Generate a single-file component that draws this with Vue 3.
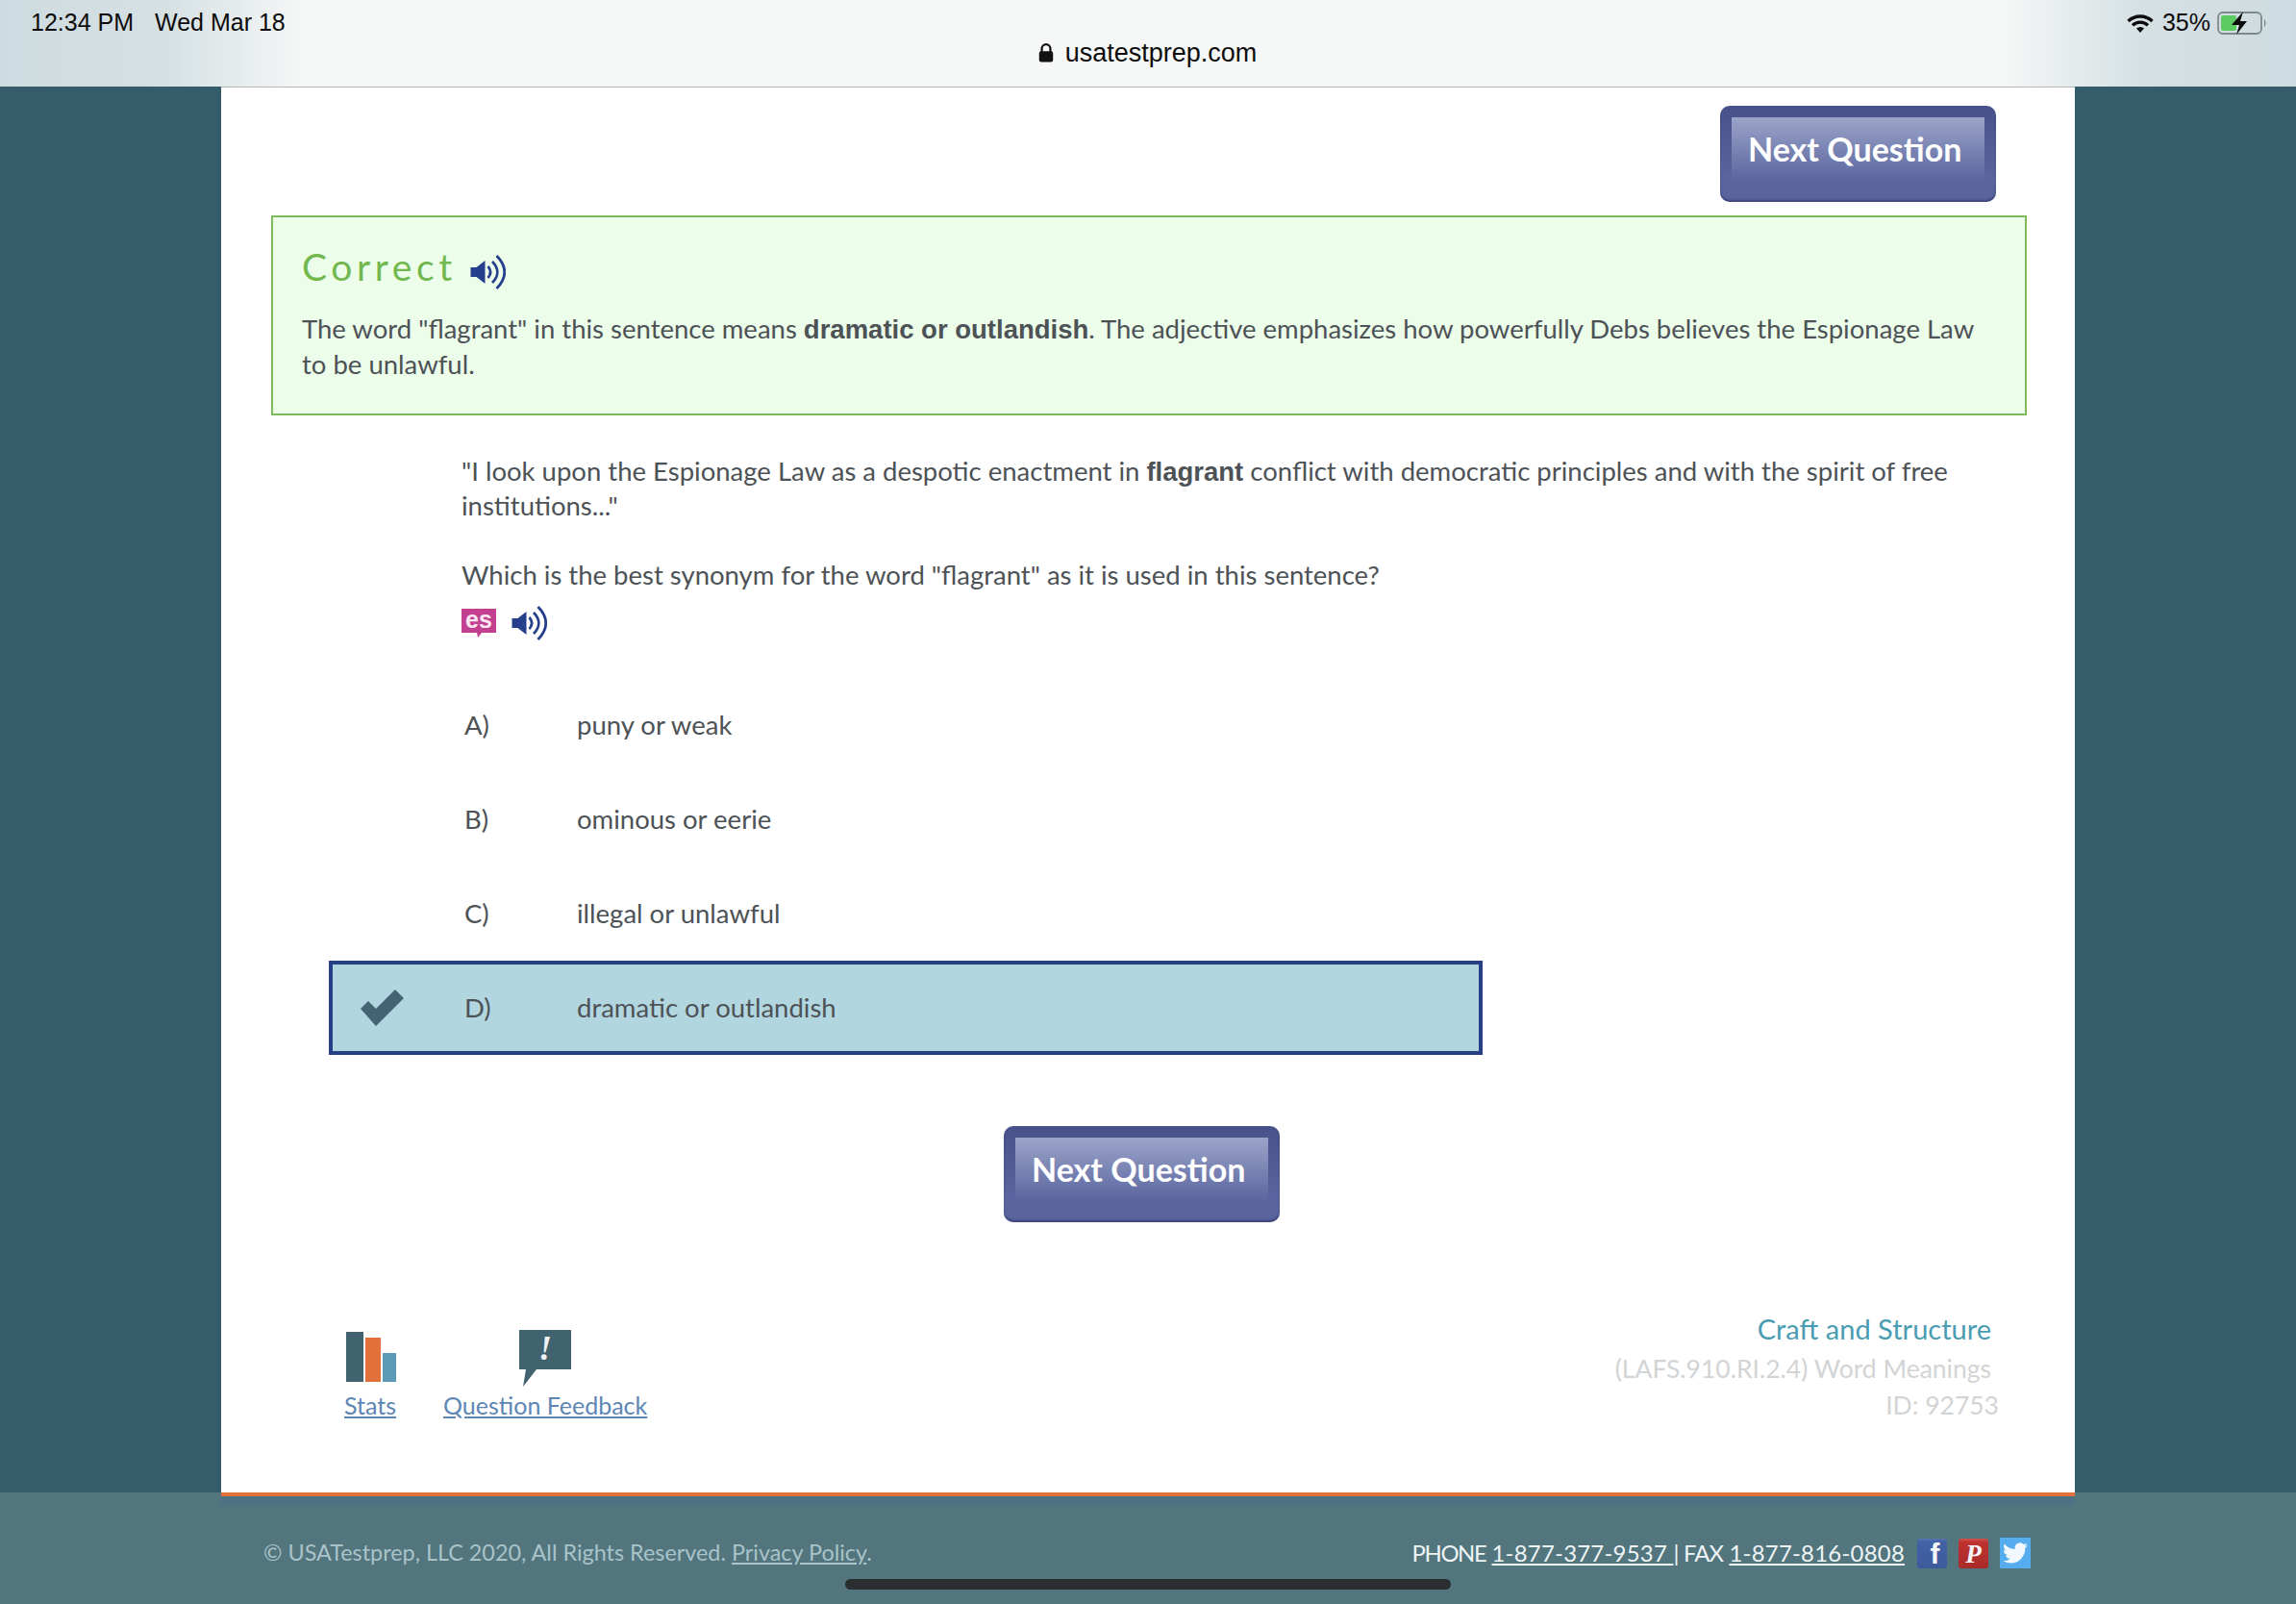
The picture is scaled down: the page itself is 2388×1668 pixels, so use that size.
<script setup>
const options = [
  { letter: 'A)', text: 'puny or weak' },
  { letter: 'B)', text: 'ominous or eerie' },
  { letter: 'C)', text: 'illegal or unlawful' },
  { letter: 'D)', text: 'dramatic or outlandish', selected: true }
]
</script>

<template>
  <div class="page">
    <header class="topbar">
      <div class="status-left"><span>12:34 PM</span><span>Wed Mar 18</span></div>
      <div class="url">
        <svg class="lock" viewBox="0 0 14 18"><path d="M3 8V5a4 4 0 0 1 8 0v3" fill="none" stroke="#111" stroke-width="2"/><rect x="0.5" y="7.5" width="13" height="10" rx="2" fill="#111"/></svg>
        <span>usatestprep.com</span>
      </div>
      <div class="status-right">
        <svg class="wifi" viewBox="0 0 28 20"><path d="M1.5 8a18 18 0 0 1 25 0M6 12.4a11.5 11.5 0 0 1 16 0" fill="none" stroke="#0c0c0c" stroke-width="3.4"/><path d="M10 15.5a6 6 0 0 1 8 0l-4 4.5z" fill="#0c0c0c"/></svg>
        <span>35%</span>
        <svg class="battery" viewBox="0 0 52 24"><rect x="1" y="1" width="45" height="22" rx="5" fill="none" stroke="#7d8a8c" stroke-width="1.8"/><rect x="4" y="4" width="16" height="16" rx="2" fill="#5ccb62"/><path d="M27 0 15 14h8l-3 10 11-14h-7z" fill="#0c0c0c"/><path d="M49 8c2 1 2 7 0 8z" fill="#7d8a8c"/></svg>
      </div>
    </header>

    <main class="panel">
      <div class="top-action">
        <a class="next-btn"><span class="next-inner">Next Question</span></a>
      </div>

      <section class="feedback">
        <h2 class="feedback-title">
          <span>Correct</span>
          <svg class="speaker" viewBox="0 0 36 36"><path d="M0 13h6l9-7v24l-9-7H0z" fill="#263f8c"/><path d="M18 12c3.5 4 3.5 8 0 12M22.5 7c7 7 7 15 0 22M27 1c11 11 11 23 0 34" fill="none" stroke="#263f8c" stroke-width="2.8"/></svg>
        </h2>
        <p class="feedback-body">The word "flagrant" in this sentence means <b>dramatic or outlandish</b>. The adjective emphasizes how powerfully Debs believes the Espionage Law to be unlawful.</p>
      </section>

      <section class="question">
        <p class="quote">"I look upon the Espionage Law as a despotic enactment in <b>flagrant</b> conflict with democratic principles and with the spirit of free institutions..."</p>
        <p class="prompt">Which is the best synonym for the word "flagrant" as it is used in this sentence?</p>
        <div class="tools">
          <svg class="es" viewBox="0 0 36 30"><path d="M0 0h36v25H21l-4 5-1-5H0z" fill="#c2408f"/><text x="18" y="19.5" text-anchor="middle" class="es-text">es</text></svg>
          <svg class="speaker" viewBox="0 0 36 36"><path d="M0 13h6l9-7v24l-9-7H0z" fill="#263f8c"/><path d="M18 12c3.5 4 3.5 8 0 12M22.5 7c7 7 7 15 0 22M27 1c11 11 11 23 0 34" fill="none" stroke="#263f8c" stroke-width="2.8"/></svg>
        </div>
      </section>

      <section class="options">
        <div v-for="o in options" :key="o.letter" class="option" :class="{ selected: o.selected }">
          <span class="check-cell">
            <svg v-if="o.selected" class="check" viewBox="0 0 45 38"><path d="M0 20 8 12l8 8L36 0l9 9-29 29z" fill="#456374"/></svg>
          </span>
          <span class="letter">{{ o.letter }}</span>
          <span class="answer">{{ o.text }}</span>
        </div>
      </section>

      <div class="bottom-action">
        <a class="next-btn"><span class="next-inner">Next Question</span></a>
      </div>

      <section class="meta">
        <div class="meta-links">
          <a class="meta-link stats">
            <span class="bars"><i class="bar b1"></i><i class="bar b2"></i><i class="bar b3"></i></span>
            <span class="meta-label">Stats</span>
          </a>
          <a class="meta-link fb-link">
            <svg class="bubble" viewBox="0 0 54 59"><path d="M0 0h54v41H18L4 59l3-18H0z" fill="#41636f"/><text x="27" y="31" text-anchor="middle" class="bang">!</text></svg>
            <span class="meta-label">Question Feedback</span>
          </a>
        </div>
        <div class="meta-info">
          <div class="standard">Craft and Structure</div>
          <div class="code">(LAFS.910.RI.2.4) Word Meanings</div>
          <div class="qid">ID: 92753</div>
        </div>
      </section>
    </main>

    <footer class="footer">
      <div class="accent"></div>
      <div class="band"></div>
      <div class="footer-row">
        <div class="copy">© USATestprep, LLC 2020, All Rights Reserved. <u>Privacy Policy</u>.</div>
        <div class="contact">
          <span><span class="label-phone">PHONE</span> <u>1-877-377-9537 </u> <span class="label-fax">| FAX</span> <u>1-877-816-0808</u></span>
          <div class="social">
            <span class="soc fb">f</span>
            <span class="soc pin">P</span>
            <svg class="tw" viewBox="0 0 32 32"><rect width="32" height="32" fill="#55acee"/><g transform="translate(3 3) scale(1.08)"><path d="M23.953 4.57a10 10 0 01-2.825.775 4.958 4.958 0 002.163-2.723c-.951.555-2.005.959-3.127 1.184a4.92 4.92 0 00-8.384 4.482C7.69 8.095 4.067 6.13 1.64 3.162a4.822 4.822 0 00-.666 2.475c0 1.71.87 3.213 2.188 4.096a4.904 4.904 0 01-2.228-.616v.06a4.923 4.923 0 003.946 4.827 4.996 4.996 0 01-2.212.085 4.936 4.936 0 004.604 3.417 9.867 9.867 0 01-6.102 2.105c-.39 0-.779-.023-1.17-.067a13.995 13.995 0 007.557 2.209c9.053 0 13.998-7.496 13.998-13.985 0-.21 0-.42-.015-.63A9.935 9.935 0 0024 4.59z" fill="#f2f8fc"/></g></svg>
          </div>
        </div>
      </div>
    </footer>

    <div class="home-indicator"></div>
  </div>
</template>

<style>
html, body { margin: 0; padding: 0; background: #345c6b; }
</style>

<style scoped>
.page {
  position: relative;
  width: 2388px;
  height: 1668px;
  overflow: hidden;
  background: #345c6b;
  display: flex;
  flex-direction: column;
  font-family: Lato, "Noto Sans", sans-serif;
  color: #4d5256;
}
.topbar {
  position: relative;
  box-sizing: border-box;
  height: 90px;
  flex: none;
  background: linear-gradient(90deg, #cedbe0 0, #d5e0e3 170px, #f6f7f7 320px, #f6f7f7 2080px, #d5e0e3 2230px, #cedbe0 100%);
  display: flex;
  justify-content: center;
  font-family: "Liberation Sans", sans-serif;
  color: #0c0c0c;
}
.status-left {
  position: absolute;
  left: 32px;
  top: 9px;
  display: flex;
  gap: 22px;
  font-size: 25px;
  line-height: 29px;
}
.url {
  display: flex;
  align-items: center;
  gap: 12px;
  height: 34px;
  margin-top: 38px;
  margin-right: 1px;
  font-size: 27px;
}
.lock { width: 16px; height: 20px; }
.status-right {
  position: absolute;
  right: 30px;
  top: 9px;
  display: flex;
  align-items: center;
  gap: 7px;
  font-size: 25px;
  line-height: 29px;
}
.wifi { width: 28px; height: 20px; margin-right: 2px; }
.battery { width: 52px; height: 24px; }

.panel {
  box-sizing: border-box;
  flex: none;
  width: 1928px;
  height: 1462px;
  margin-left: 230px;
  border-top: 1px solid #b4b6b7;
  background: #fff;
}
.top-action {
  display: flex;
  justify-content: flex-end;
  padding: 19px 82px 0 0;
}
.next-btn {
  box-sizing: border-box;
  display: block;
  width: 287px;
  height: 100px;
  padding: 12px 12px 0;
  border-radius: 10px;
  background: linear-gradient(180deg, #47528a 0, #5a659f 75%, #59639c 100%);
  box-shadow: inset 0 -2px 2px rgba(40, 46, 90, 0.55);
}
.next-inner {
  box-sizing: border-box;
  display: block;
  height: 66px;
  padding-left: 17px;
  line-height: 66px;
  background: linear-gradient(180deg, #9ba4c8 0, #5a659f 100%);
  color: #fff;
  font-family: Lato, sans-serif;
  font-size: 34px;
  font-weight: 700;
  white-space: nowrap;
}
.feedback {
  box-sizing: border-box;
  width: 1826px;
  height: 208px;
  margin: 14px 0 0 52px;
  padding: 26px 30px 0;
  border: 2px solid #7fba5f;
  background: #ecfdea;
}
.feedback-title {
  display: flex;
  align-items: center;
  gap: 14px;
  height: 50px;
  margin: 0;
  color: #72b84f;
  font-size: 39px;
  font-weight: 400;
  letter-spacing: 4.6px;
}
.feedback-title .speaker { margin-top: 11px; }
.feedback-body {
  margin: 21px 0 0;
  font-size: 27.5px;
  line-height: 37px;
}
b { font-family: "Liberation Sans", sans-serif; font-weight: 700; line-height: 0; }
.speaker { width: 37px; height: 36px; flex: none; }
.question { margin: 40px 0 0 250px; width: 1610px; font-size: 27.5px; }
.quote { margin: 0; line-height: 36px; }
.prompt { margin: 36px 0 0; line-height: 36px; }
.tools { display: flex; align-items: center; gap: 16px; margin-top: 14px; height: 36px; }
.es { width: 36px; height: 30px; overflow: visible; }
.es-text { fill: #fbe6f2; font-family: "Liberation Sans", sans-serif; font-size: 25px; font-weight: 700; }
.options { margin: 39px 0 0 112px; width: 1200px; }
.option {
  box-sizing: border-box;
  display: flex;
  align-items: center;
  height: 98px;
  font-size: 27.5px;
  border: 4px solid transparent;
}
.option.selected { background: #b2d6e0; border-color: #263f85; }
.check-cell { width: 137px; flex: none; display: flex; padding-left: 29px; box-sizing: border-box; }
.check { width: 45px; height: 38px; }
.letter { width: 117px; flex: none; margin-top: -2px; }
.answer { margin-top: -2px; }
.bottom-action { margin: 74px 0 0 814px; }
.meta {
  display: flex;
  justify-content: space-between;
  margin-top: 91px;
  padding: 0 87px 0 128px;
}
.meta-links { display: flex; gap: 49px; padding-top: 21px; }
.meta-link {
  display: flex;
  flex-direction: column;
  align-items: center;
  color: #5d86b4;
}
.bars { display: flex; align-items: flex-end; gap: 2px; height: 54px; margin-left: 1px; }
.bar { display: block; }
.b1 { width: 18px; height: 52px; background: #41636f; }
.b2 { width: 16px; height: 46px; background: #e2703a; }
.b3 { width: 14px; height: 30px; background: #5d9ab8; }
.bubble { width: 54px; height: 59px; margin-bottom: -5px; }
.bang { fill: #eef2f3; font-family: "Liberation Serif", serif; font-size: 36px; font-style: italic; font-weight: 700; }
.meta-label { margin-top: 7px; font-size: 25px; line-height: 34px; text-decoration: underline; }
.meta-info { text-align: right; font-size: 26.5px; color: #d2d4d5; }
.standard { color: #4a9cb2; font-size: 29px; line-height: 40px; }
.code { margin-top: 1px; line-height: 40px; }
.qid { margin-right: -8px; line-height: 36px; }

.footer {
  height: 116px;
  flex: none;
  background: #52757e;
  color: #a9c3c9;
}
.accent { width: 1928px; height: 4px; margin-left: 230px; background: #e2703a; }
.band { width: 1928px; height: 10px; margin-left: 230px; background: #4e7282; }
.footer-row {
  display: flex;
  justify-content: space-between;
  align-items: center;
  margin-top: 32px;
  padding: 0 276px 0 274px;
  height: 32px;
  font-size: 23.4px;
}
.contact { display: flex; align-items: center; gap: 13px; font-size: 23.9px; color: #eef4f5; }
.contact u { letter-spacing: 0.25px; }
.label-phone { letter-spacing: -1.4px; }
.label-fax { letter-spacing: -0.8px; }
.social { display: flex; align-items: center; gap: 12px; margin-top: 2px; }
.soc {
  display: flex;
  align-items: flex-end;
  justify-content: center;
  box-sizing: border-box;
  width: 31px;
  height: 31px;
  border-radius: 3px;
  color: #f4f6fa;
  font-weight: 700;
  line-height: 30px;
}
.fb {
  background: linear-gradient(180deg, #5a75b5 0, #4262a5 10%, #3d5a9c 100%);
  padding-left: 6px;
  font-family: "Liberation Sans", sans-serif;
  font-size: 30px;
}
.pin {
  background: linear-gradient(180deg, #d0524d 0, #bd322f 12%, #a92b2a 100%);
  font-family: "Liberation Serif", serif;
  font-size: 27px;
  font-style: italic;
}
.tw { width: 32px; height: 32px; }
.home-indicator {
  position: absolute;
  left: 879px;
  top: 1642px;
  width: 630px;
  height: 11px;
  border-radius: 6px;
  background: #2b2e31;
}
</style>
